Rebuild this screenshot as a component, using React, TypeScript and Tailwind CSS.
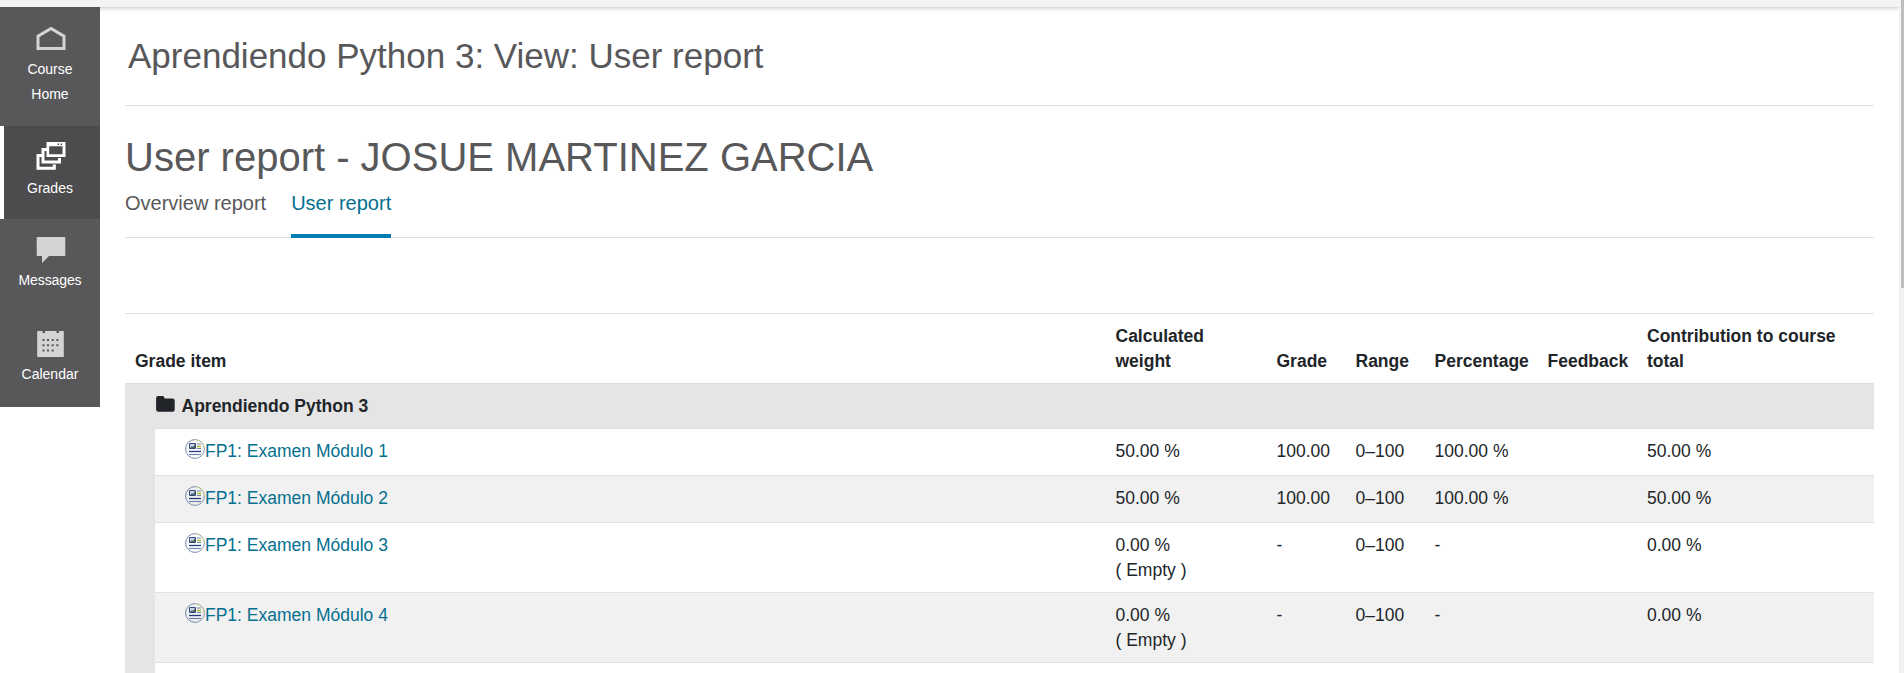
import React from "react";

const HomeIcon = () => (
  <svg width="30" height="25" viewBox="0 0 30 25" className="ml-[2px] block">
    <path d="M2 22.500V10.200L15 2.400l13 7.800v12.300z" fill="none" stroke="#d4d4d4" strokeWidth="3" />
  </svg>
);

const GradesIcon = () => (
  <svg width="30" height="28" viewBox="0 0 30 28" className="ml-[2px] block">
    <path fill="none" stroke="#fff" strokeWidth="3" d="M6 13.500H2V26.200H18.300V22.500" />
    <path fill="none" stroke="#fff" strokeWidth="3" d="M11 7.500H7V20H23.500V16" />
    <path fill="#fff" fillRule="evenodd" d="M10.500 0H29.500V15H10.500zM13.200 4.200V12.200H26.500V4.200z" />
    <path fill="#4c4c4e" d="M21.500 1.500h1.500v1.500h-1.500zM24.500 1.500h1.500v1.500h-1.500z" />
  </svg>
);

const MessagesIcon = () => (
  <svg width="30" height="26" viewBox="0 0 30 26" className="ml-[2px] block">
    <path fill="#d4d4d4" d="M1 0H28.500a.8.8 0 0 1 .8.8V18.200a.8.8 0 0 1-.8.8H13L6 26V19H1.500a.8.8 0 0 1-.8-.8V.8A.8.8 0 0 1 1.500 0z" />
  </svg>
);

const CalendarIcon = () => (
  <svg width="27" height="26" viewBox="0 0 27 26" className="ml-[1px] block">
    <path fill="#d4d4d4" d="M.8 0H5.500V2H8V0H19.500V2H22V0H26.200a.6.6 0 0 1 .6.6V25.400a.6.6 0 0 1-.6.6H.8a.6.6 0 0 1-.6-.6V.6A.6.6 0 0 1 .8 0z" />
    <path fill="#58585a" d="M5.500 8h2v2h-2zM10 8h2v2h-2zM14.700 8h2v2h-2zM19.300 8h2v2h-2zM5.500 13.300h2v2h-2zM10 13.300h2v2h-2zM14.700 13.300h2v2h-2zM19.300 13.300h2v2h-2zM5.500 18.500h2v2h-2zM10 18.500h2v2h-2zM14.700 18.500h2v2h-2z" />
  </svg>
);

const FolderIcon = () => (
  <svg width="19" height="16" viewBox="0 0 19 16" className="block">
    <path fill="#212529" d="M2.300 0H6.500a2 2 0 0 1 2 2v.5H16.500a2.200 2.200 0 0 1 2.200 2.200V13.500a2.200 2.200 0 0 1-2.200 2.200H2.300A2.200 2.200 0 0 1 .1 13.500V2.200A2.200 2.200 0 0 1 2.300 0z" />
  </svg>
);

const QuizIcon = () => (
  <svg width="20" height="20" viewBox="0 0 20 20" className="mt-[0.5px] block shrink-0">
    <path d="M10 .6A9.400 9.400 0 0 0 10 19.400" fill="none" stroke="#7185aa" />
    <path d="M10 .6A9.400 9.400 0 0 1 19.400 10" fill="none" stroke="#97aa76" />
    <path d="M19.400 10A9.400 9.400 0 0 1 10 19.400" fill="none" stroke="#8093ae" />
    <path d="M4.500 4.500h6v5h-6z" fill="#cdd6e4" stroke="#334a80" />
    <path d="M5 9l2-2 1 1 2-3v4z" fill="#4e6c60" />
    <path d="M12 5h4" stroke="#7385ad" />
    <path d="M12 7.500h4" stroke="#a2b81c" strokeWidth="1.400" />
    <path d="M12 9.500h4" stroke="#7385ad" />
    <path d="M4 12.500h12" stroke="#1f3c7c" strokeWidth="1.300" />
    <path d="M4 15.500h12" stroke="#7083ad" strokeWidth="1.200" />
  </svg>
);

type Grade = { name: string; weight: string; empty?: boolean; grade: string; pct: string };

const grades: Grade[] = [
  { name: "FP1: Examen Módulo 1", weight: "50.00 %", grade: "100.00", pct: "100.00 %" },
  { name: "FP1: Examen Módulo 2", weight: "50.00 %", grade: "100.00", pct: "100.00 %" },
  { name: "FP1: Examen Módulo 3", weight: "0.00 %", empty: true, grade: "-", pct: "-" },
  { name: "FP1: Examen Módulo 4", weight: "0.00 %", empty: true, grade: "-", pct: "-" },
];

const cols = "grid grid-cols-[1fr_161px_79px_79px_113px_99.5px_227px]";

export default function App() {
  return (
    <div className="flex h-[673px] w-full overflow-hidden bg-white font-['Liberation_Sans',Arial,sans-serif] text-[17.5px] leading-[25px] text-[#212529]">
      <div className="flex min-w-0 flex-1 flex-col">
        <header className="h-[7px] shrink-0 bg-[#f4f4f4] shadow-[0_1px_4px_rgba(0,0,0,0.25)]" />
        <div className="flex min-h-0 flex-1">
          <nav className="z-10 flex h-[400px] w-[100px] shrink-0 flex-col bg-[#58585a] text-center text-[14px] text-white">
            <a className="flex h-[119px] flex-col items-center pt-[19px]">
              <HomeIcon />
              <span className="mt-[5.5px] w-[60px]">Course Home</span>
            </a>
            <a className="flex h-[93px] flex-col items-center border-l-4 border-white bg-[#4c4c4e] pt-4 pr-1">
              <GradesIcon />
              <span className="mt-[5.5px]">Grades</span>
            </a>
            <a className="flex h-[94px] flex-col items-center pt-[18px]">
              <MessagesIcon />
              <span className="mt-[5px] tracking-[-0.1px]">Messages</span>
            </a>
            <a className="flex h-[94px] flex-col items-center pt-[18px]">
              <CalendarIcon />
              <span className="mt-[5px]">Calendar</span>
            </a>
          </nav>
          <main className="flex min-w-0 flex-1 flex-col pr-[25px] pl-[25px]">
            <h1 className="h-[99px] shrink-0 border-b border-[#dedede] pt-[25.5px] pl-[3px] text-[35px] leading-[46px] text-[#58585a]">
              Aprendiendo Python 3: View: User report
            </h1>
            <h2 className="mt-[26px] shrink-0 text-[40px] leading-[50px] text-[#58585a]">
              User report - JOSUE MARTINEZ GARCIA
            </h2>
            <div className="flex h-[56px] shrink-0 gap-[25px] border-b border-[#dedede] pt-[6px] text-[20px] leading-[30px] text-[#58585a]">
              <a>Overview report</a>
              <a className="h-[50px] border-b-4 border-[#047db5] text-[#04708f]">User report</a>
            </div>
            <div className="mt-[75px] shrink-0 border-t border-[#dedfe2]">
              <div className={`${cols} h-[69px] items-end pb-[9.5px] font-bold`}>
                <div className="pl-[10px]">Grade item</div>
                <div className="w-[100px]">Calculated weight</div>
                <div>Grade</div>
                <div>Range</div>
                <div>Percentage</div>
                <div>Feedback</div>
                <div className="pr-[20px]">Contribution to course total</div>
              </div>
              <div className="bg-[#e5e5e5]">
                <div className="flex h-[45px] gap-[7px] border-t border-[#dcdde0] pt-[9.5px] pl-[30.5px] font-bold">
                  <div className="pt-[2.5px]"><FolderIcon /></div>
                  Aprendiendo Python 3
                </div>
                <div className="pl-[30px]">
                  {grades.map((g, i) => (
                    <div
                      key={g.name}
                      className={`${cols} border-t border-[#dee2e6] pt-[9.5px] ${g.empty ? "h-[70px]" : "h-[47px]"} ${i % 2 ? "bg-[#f1f1f1]" : "bg-white"}`}
                    >
                      <div className="flex pl-[30px] text-[#04708f]">
                        <QuizIcon />
                        {g.name}
                      </div>
                      <div>
                        {g.weight}
                        {g.empty && <div>( Empty )</div>}
                      </div>
                      <div>{g.grade}</div>
                      <div>0–100</div>
                      <div>{g.pct}</div>
                      <div />
                      <div>{g.weight}</div>
                    </div>
                  ))}
                  <div className="h-5 border-t border-[#dee2e6] bg-white" />
                </div>
              </div>
            </div>
          </main>
        </div>
      </div>
      <div className="w-[5px] shrink-0 bg-[#f1f1f1] pl-[2px]">
        <div className="h-[288px] bg-[#bebebe]" />
      </div>
    </div>
  );
}
